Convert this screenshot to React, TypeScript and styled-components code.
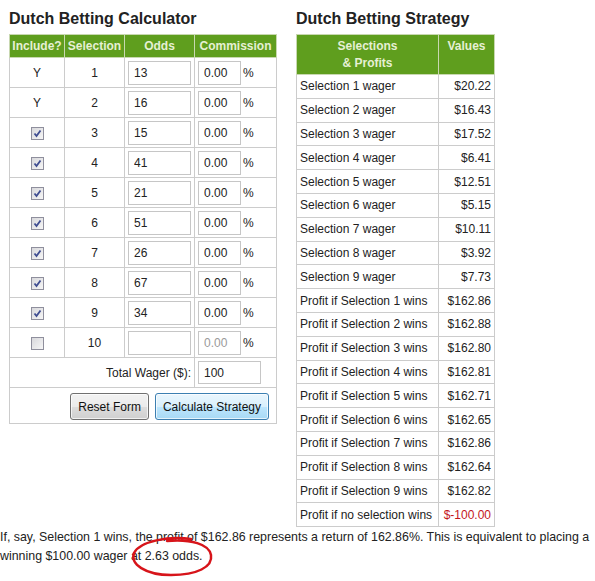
import React from "react";
import styled, { createGlobalStyle } from "styled-components";

const GlobalStyle = createGlobalStyle`
  html, body {
    margin: 0;
    padding: 0;
    background: #fff;
  }
  body {
    font-family: "Liberation Sans", Arial, sans-serif;
    font-size: 12px;
    color: #222;
  }
`;

const Page = styled.div`
  width: 595px;
  height: 581px;
  overflow: hidden;
`;

const Columns = styled.div`
  display: flex;
  align-items: flex-start;
  gap: 19px;
  padding-left: 9px;
`;

const Section = styled.div`
  display: flex;
  flex-direction: column;
`;

const Title = styled.h2`
  margin: 0;
  height: 34px;
  line-height: 38px;
  font-size: 16px;
  font-weight: bold;
  color: #222;
  white-space: nowrap;
`;

const Table = styled.table`
  border-collapse: collapse;
  border: 1px solid #ccc;
  table-layout: fixed;
`;

const Th = styled.th<{ $top?: boolean }>`
  background: #5f9e1e;
  color: #e6f0d4;
  font-weight: bold;
  font-size: 12px;
  border: 1px solid #c8d8b0;
  text-align: center;
  vertical-align: ${(p) => (p.$top ? "top" : "middle")};
  padding: ${(p) => (p.$top ? "3px 2px 0" : "0 2px")};
  line-height: 17px;
  white-space: nowrap;
`;

const Td = styled.td<{ $align?: "left" | "center" | "right"; $red?: boolean }>`
  border: 1px solid #ccc;
  text-align: ${(p) => p.$align || "center"};
  color: ${(p) => (p.$red ? "#c4161c" : "#222")};
  padding: 0 3px;
  white-space: nowrap;
`;

const CalcRow = styled.tr`
  height: 30px;
`;

const StratRow = styled.tr`
  height: 23.8px;
`;

const Field = styled.input<{ $w: number; $dim?: boolean }>`
  box-sizing: border-box;
  width: ${(p) => p.$w}px;
  height: 24px;
  border: 1px solid #c6c6c6;
  background: #fff;
  padding: 0 5px;
  font-family: "Liberation Sans", Arial, sans-serif;
  font-size: 12px;
  color: ${(p) => (p.$dim ? "#9a9a9a" : "#222")};
  vertical-align: middle;
  outline: none;
`;

const CommWrap = styled.div`
  display: flex;
  align-items: center;
  gap: 2px;
`;

const Check = styled.span<{ $on: boolean }>`
  display: inline-flex;
  align-items: center;
  justify-content: center;
  box-sizing: border-box;
  width: 13px;
  height: 13px;
  border: 1px solid #8f8f9d;
  background: linear-gradient(135deg, #d8d8dc, #f6f6f6);
  vertical-align: middle;
`;

const ButtonBar = styled.div`
  display: flex;
  justify-content: flex-end;
  gap: 6px;
  padding: 5px 7px 3px 0;
`;

const Button = styled.button<{ $primary?: boolean }>`
  height: 27px;
  padding: 0 7px;
  font-family: "Liberation Sans", Arial, sans-serif;
  font-size: 12px;
  color: #111;
  border-radius: 3px;
  border: 1px solid ${(p) => (p.$primary ? "#3c7fb1" : "#707070")};
  background: ${(p) =>
    p.$primary
      ? "linear-gradient(#eaf6fd 0%, #d9f0fc 50%, #bee6fd 51%, #a7d9f5 100%)"
      : "linear-gradient(#f2f2f2 0%, #ebebeb 50%, #dddddd 51%, #cfcfcf 100%)"};
  box-shadow: inset 0 0 0 1px rgba(255, 255, 255, 0.7);
`;

const Note = styled.div`
  position: relative;
  margin-top: 1px;
  width: 600px;
  line-height: 19px;
  font-size: 12.4px;
  color: #222;
`;

const Circle = styled.svg`
  position: absolute;
  left: 131px;
  top: 9px;
  overflow: visible;
`;

const CheckMark = () => (
  <svg width="9" height="9" viewBox="0 0 9 9">
    <path d="M1.5 4.5 L3.5 7 L7.5 1.5" fill="none" stroke="#3f4d91" strokeWidth="1.8" />
  </svg>
);

const selections = [
  { inc: "Y", odds: "13" },
  { inc: "Y", odds: "16" },
  { inc: "on", odds: "15" },
  { inc: "on", odds: "41" },
  { inc: "on", odds: "21" },
  { inc: "on", odds: "51" },
  { inc: "on", odds: "26" },
  { inc: "on", odds: "67" },
  { inc: "on", odds: "34" },
  { inc: "off", odds: "" },
];

const wagers = ["$20.22", "$16.43", "$17.52", "$6.41", "$12.51", "$5.15", "$10.11", "$3.92", "$7.73"];
const profits = ["$162.86", "$162.88", "$162.80", "$162.81", "$162.71", "$162.65", "$162.86", "$162.64", "$162.82"];

export default function App() {
  return (
    <Page>
      <GlobalStyle />
      <Columns>
        <Section>
          <Title>Dutch Betting Calculator</Title>
          <Table style={{ width: 267 }}>
            <colgroup>
              <col style={{ width: 55 }} />
              <col style={{ width: 60 }} />
              <col style={{ width: 70 }} />
              <col style={{ width: 82 }} />
            </colgroup>
            <thead>
              <tr style={{ height: 23 }}>
                <Th>Include?</Th>
                <Th>Selection</Th>
                <Th>Odds</Th>
                <Th>Commission</Th>
              </tr>
            </thead>
            <tbody>
              {selections.map((s, i) => (
                <CalcRow key={i}>
                  <Td>
                    {s.inc === "Y" ? "Y" : <Check $on={s.inc === "on"}>{s.inc === "on" && <CheckMark />}</Check>}
                  </Td>
                  <Td>{i + 1}</Td>
                  <Td>
                    <Field $w={63} defaultValue={s.odds} />
                  </Td>
                  <Td $align="left">
                    <CommWrap>
                      <Field $w={43} $dim={s.inc === "off"} defaultValue="0.00" />
                      <span>%</span>
                    </CommWrap>
                  </Td>
                </CalcRow>
              ))}
              <CalcRow>
                <Td colSpan={3} $align="right">
                  Total Wager ($):
                </Td>
                <Td $align="left">
                  <Field $w={63} style={{ height: 23 }} defaultValue="100" />
                </Td>
              </CalcRow>
              <tr>
                <Td colSpan={4} $align="right" style={{ padding: 0 }}>
                  <ButtonBar>
                    <Button>Reset Form</Button>
                    <Button $primary>Calculate Strategy</Button>
                  </ButtonBar>
                </Td>
              </tr>
            </tbody>
          </Table>
        </Section>

        <Section>
          <Title>Dutch Betting Strategy</Title>
          <Table style={{ width: 198 }}>
            <colgroup>
              <col style={{ width: 142 }} />
              <col style={{ width: 56 }} />
            </colgroup>
            <thead>
              <tr style={{ height: 40 }}>
                <Th $top>
                  Selections
                  <br />
                  &amp; Profits
                </Th>
                <Th $top>Values</Th>
              </tr>
            </thead>
            <tbody>
              {wagers.map((w, i) => (
                <StratRow key={"w" + i}>
                  <Td $align="left">Selection {i + 1} wager</Td>
                  <Td $align="right">{w}</Td>
                </StratRow>
              ))}
              {profits.map((p, i) => (
                <StratRow key={"p" + i}>
                  <Td $align="left">Profit if Selection {i + 1} wins</Td>
                  <Td $align="right">{p}</Td>
                </StratRow>
              ))}
              <StratRow>
                <Td $align="left">Profit if no selection wins</Td>
                <Td $align="right" $red>
                  $-100.00
                </Td>
              </StratRow>
            </tbody>
          </Table>
        </Section>
      </Columns>

      <Note>
        If, say, Selection 1 wins, the profit of $162.86 represents a return of 162.86%. This is equivalent to placing a
        <br />
        winning $100.00 wager at 2.63 odds.
        <Circle width="84" height="40" viewBox="0 0 84 40">
          <path
            d="M60 2 C38 -1 9 4 3 16 C-1 27 14 38 40 38 C66 38 82 30 80 18 C78 7 60 2 36 4"
            fill="none"
            stroke="#d7141a"
            strokeWidth="2.5"
            strokeLinecap="round"
          />
        </Circle>
      </Note>
    </Page>
  );
}
